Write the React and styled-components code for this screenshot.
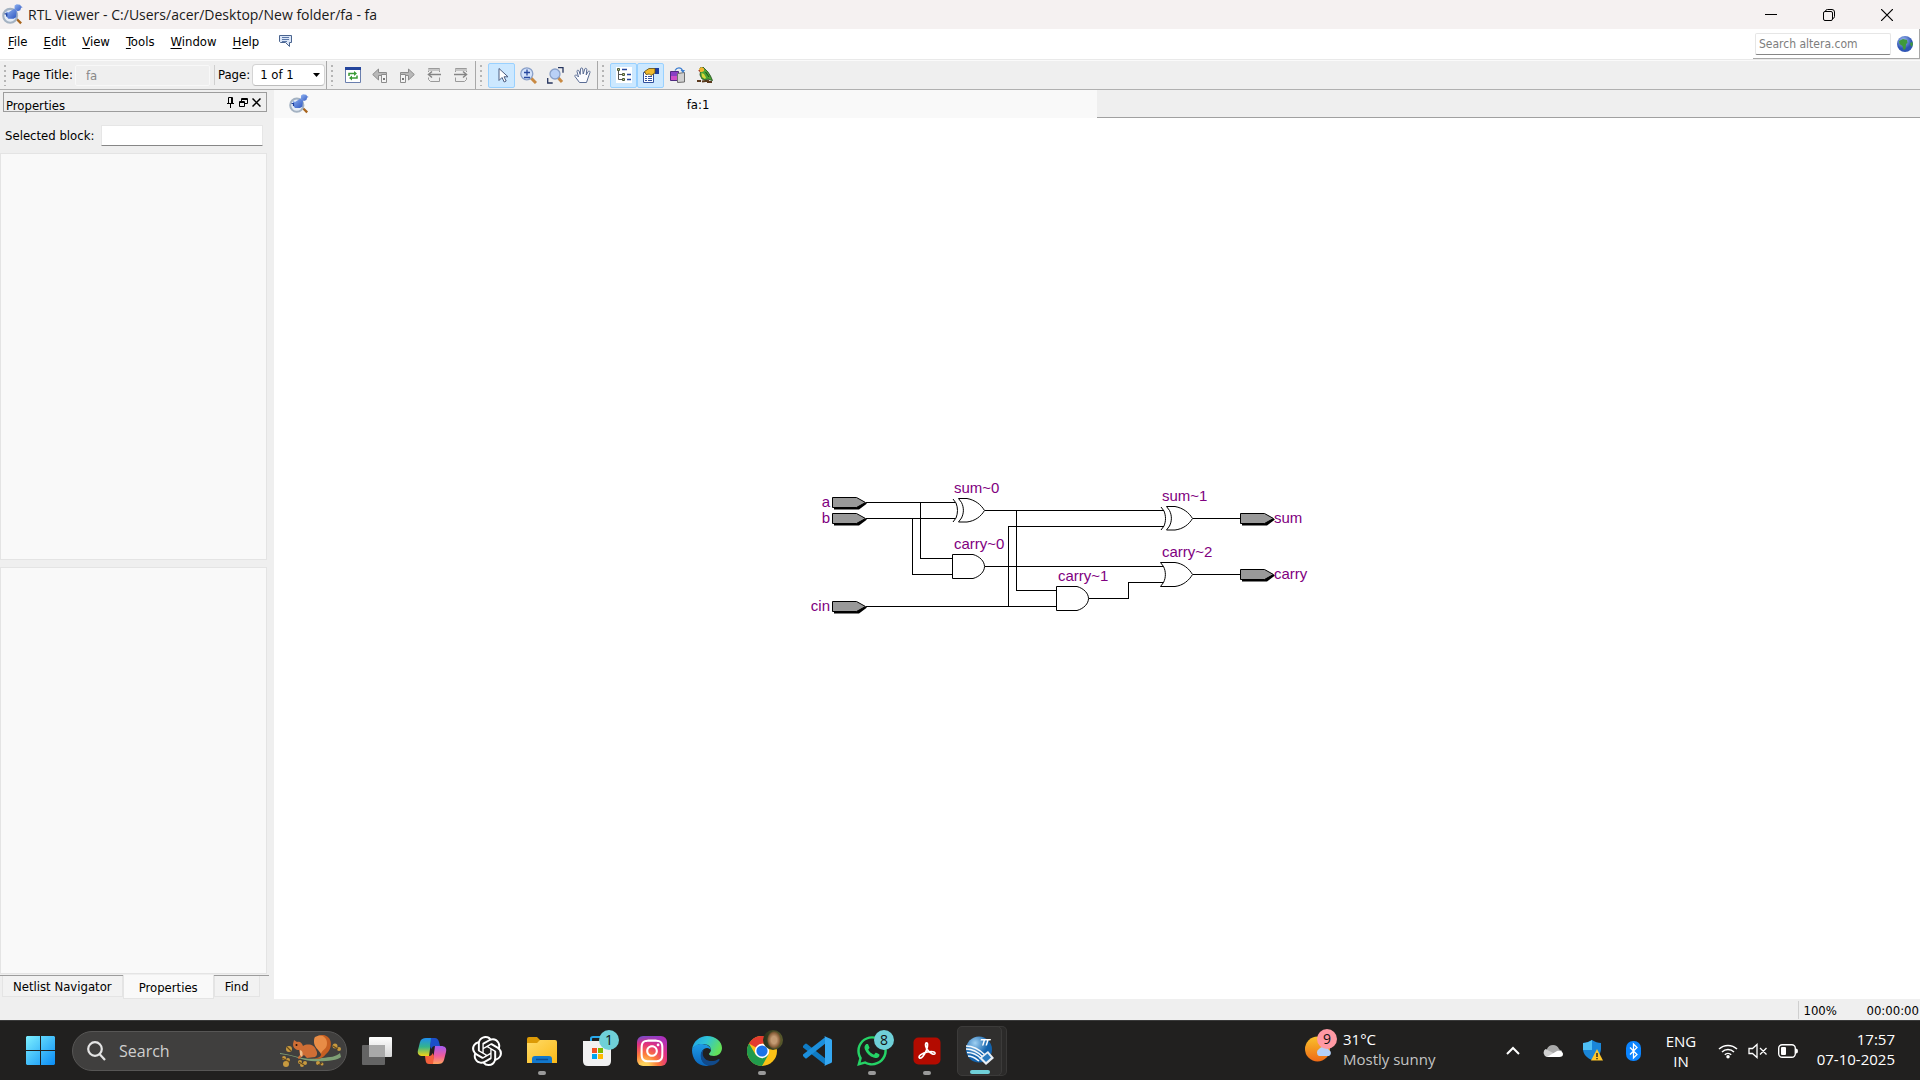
import React from "react";
import styled, { createGlobalStyle, css } from "styled-components";
import { SiOpenai } from "react-icons/si";
import { FaInstagram, FaWhatsapp } from "react-icons/fa";

const toolFont = `"DejaVu Sans Condensed", "DejaVu Sans", sans-serif`;
const shellFont = `"Open Sans", "Noto Sans", sans-serif`;

const GlobalStyle = createGlobalStyle`
  *, *::before, *::after { box-sizing: border-box; }
  body { margin: 0; background: #efefef; }
  button, input, select { font: inherit; color: inherit; margin: 0; padding: 0; border: 0; background: none; }
  svg { display: block; flex: none; }
`;

const Page = styled.div`
  display: flex;
  flex-direction: column;
  min-height: 100vh;
  font: 13px/16px ${toolFont};
  font-stretch: condensed;
  color: #000;
`;

/* ---------- window chrome ---------- */
const TitleBar = styled.header`
  display: flex;
  align-items: center;
  height: 29px;
  padding: 0 4px 0 2px;
  gap: 5px;
  background: #f5f1f1;
`;
const Title = styled.h1`
  flex: 1;
  margin: 0;
  font: 400 14px/20px ${shellFont};
  color: #1a1a1a;
`;
const WindowButtons = styled.div`
  display: flex;
`;
const WindowButton = styled.button`
  display: grid;
  place-items: center;
  width: 58px;
  height: 28px;
`;

const MenuBar = styled.div`
  display: flex;
  align-items: stretch;
  justify-content: space-between;
  height: 31px;
  background: #fff;
  border-bottom: 1px solid #e9e9e9;
`;
const Menus = styled.nav`
  display: flex;
  align-items: flex-start;
  padding-top: 3px;
`;
const MenuButton = styled.button`
  padding: 0 8px;
  height: 20px;
  line-height: 20px;
  &::first-letter { text-decoration: underline; text-underline-offset: 2px; }
`;
const IconMenuButton = styled.button`
  display: grid;
  place-items: center;
  width: 32px;
  height: 18px;
  padding-left: 5px;
`;
const SearchDock = styled.form`
  display: flex;
  align-items: center;
  gap: 6px;
  height: 30px;
  padding: 0 6px 0 2px;
  border-right: 1px solid #a8a8a8;
  border-bottom: 1px solid #a8a8a8;
`;
const SiteSearch = styled.input`
  width: 136px;
  height: 22px;
  padding: 0 3px;
  font-size: 12px;
  border: 1px solid #e6e6e6;
  border-bottom-color: #868686;
  border-radius: 2px;
  outline: 0;
  &::placeholder { color: #7d7d7d; opacity: 1; }
`;

/* ---------- tool bar ---------- */
const ToolBar = styled.div`
  display: flex;
  height: 30px;
  background: #efefef;
  border-top: 1px solid #fafafa;
  border-bottom: 1px solid #b0b0b0;
`;
const ToolGroup = styled.div`
  display: flex;
  align-items: center;
  padding: 0 1px 0 4px;
  border-right: 1px solid ${(p) => (p.$last ? "transparent" : "#a8a8a8")};
`;
const Grip = styled.span`
  width: 3px;
  height: 21px;
  margin-right: 5px;
  background: repeating-linear-gradient(#b5b5b5 0 2px, transparent 2px 5px) 0 0 / 2px 100% no-repeat;
`;
const ToolLabel = styled.label`
  white-space: nowrap;
  padding-right: 2px;
`;
const PageTitleInput = styled.input`
  width: 135px;
  height: 21px;
  padding: 0 10px;
  border: 1px solid #f8f8f8;
  border-radius: 2px;
  color: #888;
`;
const Separator = styled.span`
  width: 1px;
  height: 20px;
  margin: 0 3px 0 4px;
  background: #cfcfcf;
`;
const SelectWrap = styled.span`
  display: grid;
  align-items: center;
  & > * { grid-area: 1 / 1; }
  & > svg { justify-self: end; margin-right: 5px; pointer-events: none; }
`;
const PageSelect = styled.select`
  appearance: none;
  width: 73px;
  height: 22px;
  padding-left: 7px;
  background: #fff;
  border: 1px solid #d4d4d4;
  border-bottom-color: #bcbcbc;
  border-radius: 4px;
`;
const ToolButton = styled.button`
  display: grid;
  place-items: center;
  width: 27px;
  height: 25px;
  border: 1px solid transparent;
  border-radius: 2px;
  ${(p) => p.$on && css`
    background: #cce8ff;
    border-color: #99d1ff;
  `}
`;

/* ---------- body ---------- */
const Body = styled.div`
  display: flex;
  flex: 1;
`;
const Side = styled.aside`
  display: flex;
  flex-direction: column;
  width: 274px;
  flex: none;
  background: #efefef;
`;
const DockTitle = styled.div`
  display: flex;
  align-items: center;
  height: 20px;
  margin: 2px 7px 0 3px;
  padding: 0 3px 0 2px;
  border: 1px solid #9c9c9c;
`;
const DockName = styled.h2`
  flex: 1;
  margin: 0;
  padding-top: 8px;
  font: inherit;
`;
const DockButton = styled.button`
  display: grid;
  place-items: center;
  width: 13px;
  height: 14px;
`;
const BlockRow = styled.div`
  display: flex;
  align-items: center;
  gap: 7px;
  height: 21px;
  margin: 13px 11px 7px 5px;
  & > label { white-space: nowrap; }
`;
const BlockInput = styled.input`
  flex: 1;
  min-width: 0;
  height: 21px;
  padding: 0 4px;
  background: #fff;
  border: 1px solid #e6e6e6;
  border-bottom-color: #868686;
  border-radius: 1px;
`;
const Pane = styled.div`
  flex: 1;
  margin: 0 7px ${(p) => (p.$last ? 1 : 7)}px 0;
  background: #f9f9f9;
  border: 1px solid #e4e4e4;
`;
const DockTabs = styled.div`
  display: flex;
  align-items: flex-start;
  height: 24px;
  margin: 0 5px 0 0;
  padding-left: 2px;
  border-top: 1px solid #9c9c9c;
`;
const DockTab = styled.button`
  height: ${(p) => (p.$on ? 24 : 21)}px;
  margin-top: ${(p) => (p.$on ? -1 : 0)}px;
  padding: ${(p) => (p.$on ? "2px 15px 0" : "1px 10px 0")};
  background: ${(p) => (p.$on ? "#f9f9f9" : "#f2f2f2")};
  border: 1px solid #e4e4e4;
  border-top: 0;
`;
const Main = styled.main`
  display: flex;
  flex-direction: column;
  flex: 1;
  min-width: 0;
`;
const DocTabs = styled.div`
  display: flex;
  height: 28px;
  background: linear-gradient(#a0a0a0, #a0a0a0) 0 100% / 100% 1px no-repeat #efefef;
`;
const DocTab = styled.button`
  display: flex;
  align-items: center;
  gap: 4px;
  width: 50%;
  padding: 0 14px 0 15px;
  background: #f9f9f9;
  & > span { flex: 1; text-align: center; padding-top: 2px; }
`;
const Canvas = styled.section`
  display: grid;
  place-items: center;
  flex: 1;
  background: #fff;
  & text { font: 15px "Liberation Sans", Arial, sans-serif; fill: #800080; }
`;
const StatusBar = styled.footer`
  display: flex;
  justify-content: flex-end;
  align-items: center;
  height: 21px;
`;
const StatusCell = styled.span`
  padding: 2px 1px 0 4px;
  border-left: 1px solid ${(p) => (p.$line ? "#cfcfcf" : "transparent")};
  min-width: ${(p) => (p.$line ? 63 : 0)}px;
`;

/* ---------- task bar ---------- */
const TaskBar = styled.footer`
  display: flex;
  align-items: center;
  height: 60px;
  padding: 0 25px 0 26px;
  background: #21201f;
  border-top: 1px solid #3a3a3a;
  color: #fff;
  font: 15px/20px ${shellFont};
`;
const TaskSearch = styled.label`
  display: flex;
  align-items: center;
  gap: 13px;
  width: 275px;
  height: 40px;
  margin: 0 15px 0 17px;
  padding: 0 3px 0 14px;
  background: #403f3e;
  border: 1px solid #575655;
  border-radius: 20px;
  & > input { flex: 1; min-width: 0; font-size: 16px; outline: 0; }
  & > input::placeholder { color: #cfcfcf; opacity: 1; }
`;
const Apps = styled.div`
  display: flex;
  gap: 25px;
  flex: 1;
`;
const AppButton = styled.button`
  position: relative;
  display: grid;
  place-items: center;
  justify-content: center;
  width: 30px;
  height: 50px;
  color: #fff;
  &::after {
    content: "";
    display: ${(p) => (p.$running || p.$active ? "block" : "none")};
    position: absolute;
    bottom: 1px;
    left: 50%;
    width: ${(p) => (p.$active ? 20 : 8)}px;
    height: 4px;
    margin-left: ${(p) => (p.$active ? -10 : -4)}px;
    border-radius: 2px;
    background: ${(p) => (p.$active ? "#6fd0d8" : "#9a9a9a")};
  }
  ${(p) => p.$active && css`
    width: 45px;
    margin-left: -10px;
    background: #302f2e;
    border: 1px solid #3c3b3a;
    border-radius: 5px;
    box-shadow: 5px 0 0 -1px #2b2a29, 5px 0 0 0 #393837;
  `}
`;
const Badge = styled.span`
  position: absolute;
  top: 4px;
  right: -7px;
  width: 20px;
  height: 20px;
  border-radius: 50%;
  background: ${(p) => p.$color || "#6fd0d8"};
  color: #111;
  font: 14px/20px ${shellFont};
  text-align: center;
`;
const InstaTile = styled.span`
  display: grid;
  place-items: center;
  width: 30px;
  height: 30px;
  border-radius: 6px;
  font-size: 26px;
  background: radial-gradient(circle at 25% 105%, #ffd35c 0 12%, #fd7a3a 35%, #e03080 62%, transparent 85%), linear-gradient(120deg, #4a5ae0, #b32fb8 60%);
`;
const Weather = styled.button`
  position: relative;
  display: flex;
  align-items: center;
  gap: 10px;
  width: 188px;
  height: 50px;
  padding-bottom: 3px;
  text-align: left;
  ${Badge} { top: 3px; left: 12px; }
`;
const Dim = styled.span`
  display: block;
  color: #c4c4c4;
`;
const Tray = styled.div`
  display: flex;
  align-items: center;
`;
const TrayButton = styled.button`
  display: grid;
  place-items: center;
  width: ${(p) => p.$w || 40}px;
  height: 50px;
`;
const QuickSettings = styled.button`
  display: flex;
  align-items: center;
  gap: 10px;
  height: 50px;
  margin-left: 9px;
`;
const Clock = styled.button`
  width: 97px;
  height: 50px;
  padding-bottom: 3px;
  text-align: right;
`;

/* ---------- drawings ---------- */
const ViewerIcon = ({ size = 20 }) => (
  <svg width={size} height={size} viewBox="0 0 20 20">
    <defs>
      <linearGradient id={`vb${size}`} x1="0" y1="0" x2="1" y2="1">
        <stop offset="0" stopColor="#8fb2f2" /><stop offset="1" stopColor="#2f57c0" />
      </linearGradient>
    </defs>
    <path d="M13.200 15l1.600-1.400 4.200 4-1.600 1.700z" fill="#a8641c" />
    <circle cx="7.800" cy="11.200" r="6.600" fill="#e6edf6" stroke="#a4b2c2" strokeWidth="2" />
    <path d="M4 7l2 1 5.500-3.500 2.500 2-.5 6-2.500 1.500H6l-2-2.500z" fill={`url(#vb${size})`} />
    <path d="M12 1.500l2-1.200 3.200.4 1 1.500 1.500.8-1.500.5-.8 2.500-2.500 1-3-2z" fill={`url(#vb${size})`} />
    <path d="M2.500 9.500h2v2.500" stroke="#1d3f9c" strokeWidth="1.200" fill="none" />
  </svg>
);

const Chat = () => (
  <svg width="15" height="14" viewBox="0 0 15 14">
    <path d="M1.500 1.500h12v7h-2v4l-4-4h-5l-1-1z" fill="#dbe6f7" stroke="#4a648f" />
    <path d="M4 3.500h7M4 5.500h7M4 7.500h5" stroke="#5b78a8" />
  </svg>
);

const Globe = () => (
  <svg width="16" height="16" viewBox="0 0 16 16">
    <defs><radialGradient id="globe" cx=".4" cy=".3"><stop offset="0" stopColor="#a9c4f5" /><stop offset="1" stopColor="#2f55b5" /></radialGradient></defs>
    <circle cx="8" cy="8" r="8" fill="url(#globe)" />
    <path d="M2 5l4-2 4 1 .5 3-1.500 1-.5 5-2 1-1-4-3-2zM13 7l2.500-1 .3 3-1.800 2z" fill="#3f9a3c" />
  </svg>
);

const Refresh = () => (
  <svg width="16" height="16" viewBox="0 0 16 16">
    <path d="M.5.5h15v15H.5z" fill="#fff" stroke="#6a7fae" />
    <path d="M0 0h16v3H0z" fill="#24459c" />
    <path d="M4 9V6.500h5.500M12 8.500V11H6.500" stroke="#3a9b35" strokeWidth="1.500" fill="none" />
    <path d="M9 4l3 2.500L9 9zM7 8.500L4 11l3 2.500z" fill="#3a9b35" />
  </svg>
);

const NavArrow = ({ flip }) => (
  <svg width="16" height="16" viewBox="0 0 16 16">
    <g transform={flip ? "matrix(-1 0 0 1 16 0)" : undefined}>
      <path d="M.7 7.500L6.500 2v3.500h8v3h-8V13z" fill="#b9b9b9" stroke="#8c8c8c" />
      <path d="M9.500 7.500h5v8h-5z" fill="#f4f4f4" stroke="#8c8c8c" />
      <path d="M11 11h2v2h-2z" fill="#777" />
    </g>
  </svg>
);

const SheetArrow = ({ flip }) => (
  <svg width="16" height="16" viewBox="0 0 16 16">
    <g transform={flip ? "matrix(-1 0 0 1 16 0)" : undefined}>
      <path d="M2.500 5V1.500h11V5M2.500 10.500v2l2 2h9v-4" fill="#eee" stroke="#9a9a9a" />
      <path d="M2 3h11.500" stroke="#c6c6c6" strokeWidth="2" />
      <path d="M3 7.500h12" stroke="#858585" strokeWidth="1.500" />
      <path d="M6 4.500l-3.500 3 3.500 3" stroke="#858585" strokeWidth="1.500" fill="none" />
    </g>
  </svg>
);

const Cursor = () => (
  <svg width="18" height="18" viewBox="0 0 18 18">
    <path d="M6 2.500v12l3-3 2.200 4.500 2-1-2.200-4.200h4z" fill="#fff" stroke="#4b5c80" />
  </svg>
);

const Lens = ({ plus }) => (
  <svg width="17" height="17" viewBox="0 0 17 17">
    {plus ? (
      <>
        <path d="M11 11l5 5" stroke="#c98a43" strokeWidth="3" />
        <circle cx="6.800" cy="6.800" r="6" fill="#d3e2fa" stroke="#8aa0c8" strokeWidth="1.300" />
        <path d="M4 5.500h6M7 2.500v6M4 10.500h6" stroke="#26479f" strokeWidth="1.300" />
      </>
    ) : (
      <>
        <path d="M11 0.700h5v5M.7 11v5h5" stroke="#26355e" strokeWidth="1.300" fill="none" />
        <path d="M11 10.500l4 4.500" stroke="#c98a43" strokeWidth="3" />
        <circle cx="8" cy="7" r="5" fill="#b9d0f6" stroke="#8aa0c8" strokeWidth="1.300" />
      </>
    )}
  </svg>
);

const Hand = () => (
  <svg width="18" height="17" viewBox="0 0 18 17">
    <path d="M5.500 15.500L1 9.500c-.6-1.400 1-2 1.800-1.200L4.500 10 3 4.500c-.2-1.500 1.500-1.700 2-.5l1.200 3.500L6.500 2c.2-1.400 2-1.400 2.200 0l.5 5L10.800 2c.4-1.200 2-.8 2 .5l-.6 5.500 2-3.500c.8-1 2-.3 1.800.8L14 11l-1.500 4.500z" fill="#fbfcff" stroke="#5a6c94" />
  </svg>
);

const Tree = () => (
  <svg width="16" height="16" viewBox="0 0 16 16">
    <path d="M0 0h16v16H0z" fill="#fff" />
    <path d="M2.500 4v8.500H6M2.500 7.500H6" stroke="#555" fill="none" />
    <path d="M1.500 1.500h2v2h-2zM6.500 6.500h2v2h-2zM6.500 11.500h2v2h-2z" fill="#c8c87a" stroke="#4a5a3a" />
    <path d="M6 2.500h5M11 7.500h4M11 12.500h4" stroke="#26479f" strokeWidth="1.500" />
  </svg>
);

const PropertySheet = () => (
  <svg width="17" height="16" viewBox="0 0 17 16">
    <path d="M1.500 5.500h10v10h-10z" fill="#fff" stroke="#31519e" />
    <path d="M3 9.500h2M6 9.500h4M3 11.500h2M6 11.500h4M3 13.500h2M6 13.500h4" stroke="#31519e" />
    <path d="M13 1h4v6h-4z" fill="#1d3da0" />
    <path d="M2.500 4.500L7 1.500h6V6L9 8.500 7.500 7 4 7.500z" fill="#f0b92c" stroke="#5c4712" strokeWidth=".8" />
  </svg>
);

const Partition = () => (
  <svg width="16" height="16" viewBox="0 0 16 16">
    <path d="M.5 4.500h8v9h-8z" fill="#8a3fc4" stroke="#4f2a80" />
    <path d="M1 9h7v4H1z" fill="#d04fc8" />
    <path d="M7.500 6.500l7-1v9.500l-7 .5z" fill="#d0d0d0" stroke="#6e6e6e" />
    <path d="M5 3.500C7 0 11 0 12.500 3.500" stroke="#3f7fd0" strokeWidth="1.300" fill="none" />
    <path d="M10.500 3h4.500l-2 3z" fill="#3f7fd0" />
  </svg>
);

const Parrot = () => (
  <svg width="16" height="16" viewBox="0 0 16 16">
    <path d="M0 14h4M5 14.500l7-1M10 15h5" stroke="#5b3a1e" strokeWidth="2" />
    <path d="M3 1l3-1 2 2 3 3 2.500 4 2 4.500-2-.5-2.500-1-2 1-4-1-2-4 .5-4z" fill="#4aa335" stroke="#1f4d17" strokeWidth=".8" />
    <path d="M2 2L4.500 0l2.500 1.500V4L5 5 3 5z" fill="#f3b431" />
    <path d="M4.500 6l2.500 1 2 3.500-1 1.500-3-2z" fill="#d6d63a" />
    <path d="M8.500 5l3.500 5" stroke="#1f4d17" />
    <path d="M1 3.500L3 3v2z" fill="#a3341c" />
  </svg>
);

const Pin = () => (
  <svg width="9" height="11" viewBox="0 0 9 11" fill="none" stroke="#000"><path d="M2.500 6V.5h4V6M1 6.500h7M4.500 7v4M5.500 1v5" /></svg>
);
const Float = () => (
  <svg width="9" height="9" viewBox="0 0 9 9" fill="none" stroke="#000"><path d="M2.500 3V.5h6v5H6M2.500 1.500h6M.5 3.500h5v5h-5zM.5 4.500h5" /></svg>
);
const Cross = () => (
  <svg width="9" height="9" viewBox="0 0 9 9" stroke="#000" strokeWidth="1.500"><path d="M.5.5l8 8M8.500.5l-8 8" /></svg>
);

/* ---------- schematic ---------- */
const Port = ({ x, y }) => (
  <g transform={`translate(${x} ${y})`}>
    <path d="M2 5h22l6-4h4l1 .5-8 6H2z" fill="#000" />
    <path d="M.5-4.500h24l9 5-9 5h-24z" fill="#999" stroke="#000" />
  </g>
);
const AndGate = ({ x, y }) => (
  <path transform={`translate(${x} ${y})`} d="M21-11.500H.5v24H21c7-2 11.500-7 11.500-12s-4.500-10-11.500-12z" fill="#fff" stroke="#000" />
);
const OrGate = ({ x, y }) => (
  <path transform={`translate(${x} ${y})`} d="M.5-11.500H15c8 1 14 6 17.500 12-3.500 6-9.500 11-17.500 12H.5l3-4c2.500-5 2.500-11 0-16z" fill="#fff" stroke="#000" />
);
const XorGate = ({ x, y }) => (
  <g transform={`translate(${x} ${y})`} fill="none" stroke="#000">
    <path d="M1-11l3 4c2 5 2 10 0 15l-3 4" />
    <path d="M6.500-11.500H15c8 1.500 14 6 17.500 12-3.500 6-9.500 10.500-17.500 11.500H6.500l3-4c2.500-5 2.500-10.500 0-15.500z" />
  </g>
);

const Schematic = () => (
  <svg width="594" height="161" viewBox="800 478 594 161" role="img" aria-label="Full adder netlist">
    <g fill="none" stroke="#000" shapeRendering="crispEdges">
      <path d="M866 502.500h89M866 518.500h89M866 606.500h190M920.500 502.500v56h32M912.500 518.500v56h40" />
      <path d="M985 510.500h179M1016.500 510.500v80h40M1008.500 606.500v-80h155M985 566.500h179" />
      <path d="M1089 598.500h39.500v-16h36M1193 518.500h47M1193 574.500h47" />
    </g>
    <Port x={832} y={502} /><Port x={832} y={518} /><Port x={832} y={606} />
    <Port x={1240} y={518} /><Port x={1240} y={574} />
    <XorGate x={952} y={510} /><XorGate x={1160} y={518} />
    <AndGate x={952} y={566} /><AndGate x={1056} y={598} /><OrGate x={1160} y={574} />
    <g textAnchor="end">
      <text x="830" y="507">a</text><text x="830" y="523">b</text><text x="830" y="611">cin</text>
    </g>
    <text x="954" y="493">sum~0</text><text x="954" y="549">carry~0</text>
    <text x="1058" y="581">carry~1</text><text x="1162" y="501">sum~1</text>
    <text x="1162" y="557">carry~2</text><text x="1274" y="523">sum</text><text x="1274" y="579">carry</text>
  </svg>
);

/* ---------- task bar drawings ---------- */
const Windows = () => (
  <svg width="29" height="29" viewBox="0 0 29 29">
    <defs><linearGradient id="win" x1="0" y1="0" x2="1" y2="1"><stop offset="0" stopColor="#7df0ff" /><stop offset="1" stopColor="#0a8cf5" /></linearGradient></defs>
    <path d="M1 0h13v14H0V1zM15 0h13l1 1v13H15zM0 15h14v14H1l-1-1zM15 15h14v13l-1 1H15z" fill="url(#win)" />
  </svg>
);
const Squirrel = () => (
  <svg width="63" height="34" viewBox="0 0 63 34">
    <path d="M0 19c14 2 25 8 42 5 8-1 14-1 18-5l1 4c-5 5-28 5-36 3C15 23 10 21 0 20z" fill="#7fa075" />
    <path d="M32 24c10 1 11-4 7-9-8-7-4-14 4-14 10 1 10 14 3 19-3 4-7 6-14 4z" fill="#c65f22" />
    <path d="M35 3c6-4 12 0 12 6 0 7-5 6-6 11-2-4-7-7-7-12 0-2 0-4 1-5z" fill="#e88c46" />
    <path d="M13 10l1-4 3 2c3-1 5 1 6 4 5-3 12-1 13 4 2 3 1 6-1 7l-8 1-3-3-5 4c-2-1-1-2 1-4l-1-5c-3 0-6-2-6-6z" fill="#cf6e35" />
    <path d="M20 16c3 1 3 4 2 7l-2-2z" fill="#f0bd8a" /><circle cx="16.500" cy="11" r="1" fill="#2b1408" />
    <g fill="#c79a3f"><circle cx="9" cy="15" r="3" /><circle cx="4" cy="24" r="2" /><circle cx="8" cy="26" r="2" /><circle cx="6" cy="30" r="3" /><circle cx="20" cy="28" r="2" /><circle cx="25" cy="29" r="2" /><circle cx="22" cy="31" r="2" /><circle cx="38" cy="29" r="2" /><circle cx="42" cy="30" r="1.500" /><circle cx="55" cy="12" r="2.500" /><circle cx="59" cy="15" r="2" /></g>
    <g stroke="#6b4c1a" strokeWidth="1.200"><path d="M7 13l4 4M2 24l8 4M19 28l5 3M38 31l4-2M53 12l5 3" /></g>
  </svg>
);
const TaskView = () => (
  <svg width="30" height="28" viewBox="0 0 30 28">
    <defs><linearGradient id="tv" x1="0" y1="0" x2="0" y2="1"><stop offset="0" stopColor="#fff" /><stop offset="1" stopColor="#d5d5d5" /></linearGradient></defs>
    <rect y="8" width="23" height="20" rx="1" fill="#646464" /><rect x="7" width="23" height="20" rx="1" fill="url(#tv)" /><path d="M7 8h16v12H7z" fill="#a9a9a9" />
  </svg>
);
const Copilot = () => (
  <svg width="30" height="28" viewBox="0 0 30 28">
    <defs>
      <linearGradient id="cp1" x1="0" y1="0" x2="0" y2="1"><stop offset="0" stopColor="#1f8df0" /><stop offset=".5" stopColor="#35b58a" /><stop offset="1" stopColor="#f4d414" /></linearGradient>
      <linearGradient id="cp2" x1="0" y1="0" x2="0" y2="1"><stop offset="0" stopColor="#a35cf2" /><stop offset=".55" stopColor="#f05c9c" /><stop offset="1" stopColor="#ffa45c" /></linearGradient>
    </defs>
    <path d="M18 9h6c4 0 6 2 5 6l-2 8c-1 3-3 4-6 4h-9c3 0 3-2 4-4z" fill="url(#cp2)" />
    <path d="M12 19H6c-4 0-6-2-5-6l2-8c1-3 3-4 6-4h9c-3 0-3 2-4 4z" fill="url(#cp1)" />
    <path d="M14 1h4c2 0 3 1 4 4l1 4h-5c-2 0-3 1-3.500 3L13 9z" fill="#1c4fc9" />
    <path d="M16 27h-4c-2 0-3-1-3.500-4l-.5-4h4c2 0 3-1 3.500-3L17 19z" fill="#f3603c" />
  </svg>
);
const Folder = () => (
  <svg width="30" height="27" viewBox="0 0 30 27">
    <defs><linearGradient id="fd" x1="0" y1="0" x2="1" y2="1"><stop offset="0" stopColor="#ffdb68" /><stop offset="1" stopColor="#fbb917" /></linearGradient></defs>
    <path d="M0 2q0-2 2-2h8l3 3v5H0z" fill="#dc9a06" /><path d="M0 6h10l3-3h15q2 0 2 2v21H0z" fill="url(#fd)" />
    <path d="M5 26v-4q0-3 3-3h14q3 0 3 3v4z" fill="#1378cc" /><path d="M9 22.500h12" stroke="#0b4c94" strokeWidth="1.500" />
  </svg>
);
const Store = () => (
  <svg width="30" height="30" viewBox="0 0 30 30">
    <path d="M9 7V2.500Q9 1 11 1h8q2 0 2 2v4" fill="none" stroke="#28a8ea" strokeWidth="2" />
    <path d="M1 5h28v20q0 5-5 5H6q-5 0-5-5z" fill="#f1f1f1" />
    <path d="M10 12h5v5h-5z" fill="#f25022" /><path d="M16 12h5v5h-5z" fill="#7fba00" /><path d="M10 18h5v5h-5z" fill="#00a4ef" /><path d="M16 18h5v5h-5z" fill="#ffb900" />
  </svg>
);
const Edge = () => (
  <svg width="30" height="30" viewBox="0 0 30 30">
    <defs>
      <linearGradient id="e1" x1="0" y1="0" x2="1" y2=".4"><stop offset="0" stopColor="#1f9ee6" /><stop offset=".5" stopColor="#2fc4d8" /><stop offset="1" stopColor="#63e05a" /></linearGradient>
      <linearGradient id="e2" x1="0" y1="0" x2="0" y2="1"><stop offset="0" stopColor="#1e9be6" /><stop offset="1" stopColor="#0a66bd" /></linearGradient>
    </defs>
    <path d="M0 14C1 5 8 0 15 0c9 0 15 6 15 12 0 5-4 8-8 8-3 0-5-1-5-2s2-2 2-4c0-4-4-6-8-6-6 0-10 3-11 6z" fill="url(#e1)" />
    <path d="M0 14c1-4 5-6 10-6 5 0 9 3 9 6-1-1-2-2-4-2-4 0-6 4-6 8 0 5 4 9 9 9.500C6 32 0 23 0 14z" fill="url(#e2)" />
    <path d="M12 13c-4 7 2 13 9 12 3 0 5-2 6-2 1 0 .5 1 0 2-5 6-14 6-17 0-2-4-2-9 2-12z" fill="#114a8b" />
  </svg>
);
const Chrome = () => (
  <svg width="30" height="30" viewBox="0 0 30 30">
    <circle cx="15" cy="15" r="15" fill="#fbc116" /><path d="M15 15L2 7.500A15 15 0 0 1 28 7.500H15z" fill="#e33b2e" />
    <path d="M2 7.500A15 15 0 0 0 15 30l6.500-11.500L15 15l-6.500 3.500z" fill="#219b4c" />
    <circle cx="15" cy="15" r="7.200" fill="#fff" /><circle cx="15" cy="15" r="5.600" fill="#1a73e8" />
  </svg>
);
const Avatar = styled.span`
  position: absolute;
  top: 4px;
  right: -6px;
  width: 20px;
  height: 20px;
  border-radius: 50%;
  background: radial-gradient(ellipse 7px 9px at 55% 50%, #c39a72 0 40%, #8a5f3a 80%, transparent 100%), linear-gradient(90deg, #26301a, #5a5a2c);
`;
const Code = () => (
  <svg width="30" height="30" viewBox="0 0 30 30">
    <path d="M1 10l2-2q1-1 2 0l19 15v6.500L1 11.500z" fill="#0f7bc4" /><path d="M1 20l2 2q1 1 2 0L24 7V.5L1 18.500z" fill="#1c8fdc" />
    <path d="M22 0l7 3q1 .5 1 1.500v21q0 1-1 1.500l-7 3q1-.5 1-2V2q0-1.500-1-2z" fill="#35a8f2" />
  </svg>
);
const Acrobat = () => (
  <svg width="28" height="28" viewBox="0 0 28 28">
    <rect width="27" height="27" x=".5" y=".5" rx="5" fill="#b30b00" />
    <path d="M13 6c2-1 2 3 .5 7-2 5-5 9-7 8-2-2 3-5 8-6 4-.7 8-.5 7.500 1.500-.8 2-5-.5-7-3C12.500 10.500 12 7 13 6z" fill="none" stroke="#fff" strokeWidth="1.700" />
  </svg>
);
const Quartus = () => (
  <svg width="28" height="29" viewBox="0 0 28 29">
    <defs><radialGradient id="qt" cx=".35" cy=".25"><stop offset="0" stopColor="#9fd0f2" /><stop offset="1" stopColor="#1363ad" /></radialGradient></defs>
    <circle cx="13" cy="13.500" r="13" fill="url(#qt)" />
    <path d="M0 10c7 0 13 3 19 9M0 13c7 0 12 3 17 8M1 16.500c6 0 10 2 14 6M2 20c5 0 7 2 11 5" stroke="#f3f8fc" strokeWidth="1.500" fill="none" />
    <path d="M13 22l9-7 6 7-8 7z" fill="#e8eef4" /><path d="M16 22l5.500-4.500 3.500 4L20 26z" fill="#2a7bbf" />
    <path d="M15 3h10l-.5 1.500h-2l-1.500 5h-1.500l1.500-5h-2l-1.500 5H16l1.500-5h-3z" fill="#fff" />
  </svg>
);
const SunCloud = () => (
  <svg width="28" height="26" viewBox="0 0 28 26">
    <defs><linearGradient id="sun" x1="0" y1="0" x2="0" y2="1"><stop offset="0" stopColor="#f9c22b" /><stop offset="1" stopColor="#ef6a16" /></linearGradient></defs>
    <circle cx="12.500" cy="13" r="12.500" fill="url(#sun)" />
    <path d="M14 20a4 4 0 0 1 0-7 6 6 0 0 1 10 1 3.300 3.300 0 0 1 0 6z" fill="#b4d0f8" />
  </svg>
);
const CloudIcon = () => (
  <svg width="20" height="14" viewBox="0 0 20 14">
    <path d="M4 13a4.500 4.500 0 0 1 0-8 6.500 6.500 0 0 1 12 0 4.500 4.500 0 0 1 0 8z" fill="#a9a9a9" /><path d="M4 13a4.500 4.500 0 0 1-1.500-8L14 11l4-5a4.500 4.500 0 0 1-2 7z" fill="#d0d0d0" />
    <path d="M4 13l10-6c3-1 6 1 6 3s-1 3-4 3z" fill="#fff" />
  </svg>
);
const Shield = () => (
  <svg width="20" height="21" viewBox="0 0 20 21">
    <path d="M9 0c3 2 6 3 9 3v6c0 5-4 9-9 11-5-2-9-6-9-11V3c3 0 6-1 9-3z" fill="#1a86d8" /><path d="M9 0v10H0V3c3 0 6-1 9-3z" fill="#4fc0f5" />
    <path d="M14 9l6 11.500H8z" fill="#ffc629" /><path d="M14 13v4M14 18v1.200" stroke="#222" strokeWidth="1.400" />
  </svg>
);
const BluetoothIcon = () => (
  <svg width="15" height="20" viewBox="0 0 15 20"><rect width="15" height="20" rx="7" fill="#0a84ff" /><path d="M4 6.500l7 7L7.500 17V3L11 6.500l-7 7" fill="none" stroke="#fff" strokeWidth="1.300" /></svg>
);
const Status = () => (
  <>
    <svg width="20" height="16" viewBox="0 0 20 16" fill="none" stroke="#fff" strokeWidth="1.500"><path d="M1 6a13 13 0 0 1 18 0M4 9a8.500 8.500 0 0 1 12 0M6.800 11.800a4.600 4.600 0 0 1 6.400 0" /><circle cx="10" cy="13.800" r="1" fill="#fff" /></svg>
    <svg width="20" height="16" viewBox="0 0 20 16" fill="none" stroke="#fff" strokeWidth="1.300"><path d="M1 5.500h3.500L9 1.500v13l-4.500-4H1zM12 5l6.500 6.500M18.500 5L12 11.500" /></svg>
    <svg width="20" height="14" viewBox="0 0 20 14"><rect x=".7" y=".7" width="16.600" height="12.600" rx="3.500" fill="none" stroke="#fff" strokeWidth="1.400" /><rect x="3" y="3" width="5" height="8" rx="1" fill="#fff" /><path d="M18 4.500q2 0 2 2.500t-2 2.500z" fill="#fff" /></svg>
  </>
);

const Tool = ({ label, on, children }) => (
  <ToolButton type="button" aria-label={label} title={label} $on={on}>{children}</ToolButton>
);

export default function App() {
  return (
    <Page>
      <GlobalStyle />
      <TitleBar>
        <ViewerIcon size={21} />
        <Title>RTL Viewer - C:/Users/acer/Desktop/New folder/fa - fa</Title>
        <WindowButtons>
          <WindowButton aria-label="Minimize"><svg width="12" height="12" viewBox="0 0 12 12"><path d="M0 5.500h12" stroke="#000" /></svg></WindowButton>
          <WindowButton aria-label="Restore"><svg width="12" height="12" viewBox="0 0 12 12" fill="none" stroke="#000"><rect x=".5" y="2.500" width="9" height="9" rx="1.500" /><path d="M2.500 2Q2.800.5 4.500.5h4.500q2.500 0 2.500 2.500v4.500q0 1.500-1.500 2" /></svg></WindowButton>
          <WindowButton aria-label="Close"><svg width="12" height="12" viewBox="0 0 12 12" stroke="#000" strokeWidth="1.200"><path d="M0 0l12 12M12 0L0 12" /></svg></WindowButton>
        </WindowButtons>
      </TitleBar>

      <MenuBar>
        <Menus aria-label="Main menu">
          {["File", "Edit", "View", "Tools", "Window", "Help"].map((m) => <MenuButton key={m}>{m}</MenuButton>)}
          <IconMenuButton aria-label="Feedback"><Chat /></IconMenuButton>
        </Menus>
        <SearchDock>
          <SiteSearch aria-label="Search altera.com" placeholder="Search altera.com" />
          <button type="button" aria-label="Go"><Globe /></button>
        </SearchDock>
      </MenuBar>

      <ToolBar>
        <ToolGroup>
          <Grip />
          <ToolLabel htmlFor="page-title">Page Title:</ToolLabel>
          <PageTitleInput id="page-title" defaultValue="fa" disabled />
          <Separator />
          <ToolLabel htmlFor="page-no">Page:</ToolLabel>
          <SelectWrap>
            <PageSelect id="page-no"><option>1 of 1</option></PageSelect>
            <svg width="7" height="4" viewBox="0 0 7 4"><path d="M0 0h7L3.500 4z" /></svg>
          </SelectWrap>
        </ToolGroup>
        <ToolGroup>
          <Grip />
          <Tool label="Refresh"><Refresh /></Tool>
          <Tool label="Back"><NavArrow /></Tool>
          <Tool label="Forward"><NavArrow flip /></Tool>
          <Tool label="Previous page"><SheetArrow /></Tool>
          <Tool label="Next page"><SheetArrow flip /></Tool>
        </ToolGroup>
        <ToolGroup>
          <Grip />
          <Tool label="Selection tool" on><Cursor /></Tool>
          <Tool label="Zoom tool"><Lens plus /></Tool>
          <Tool label="Fit in window"><Lens /></Tool>
          <Tool label="Hand tool"><Hand /></Tool>
        </ToolGroup>
        <ToolGroup $last>
          <Grip />
          <Tool label="Netlist navigator" on><Tree /></Tool>
          <Tool label="Properties" on><PropertySheet /></Tool>
          <Tool label="Partition"><Partition /></Tool>
          <Tool label="Bird's eye view"><Parrot /></Tool>
        </ToolGroup>
      </ToolBar>

      <Body>
        <Side>
          <DockTitle>
            <DockName>Properties</DockName>
            <DockButton aria-label="Pin"><Pin /></DockButton>
            <DockButton aria-label="Float"><Float /></DockButton>
            <DockButton aria-label="Close panel"><Cross /></DockButton>
          </DockTitle>
          <BlockRow>
            <label htmlFor="block">Selected block:</label>
            <BlockInput id="block" />
          </BlockRow>
          <Pane />
          <Pane $last />
          <DockTabs>
            <DockTab>Netlist Navigator</DockTab>
            <DockTab $on>Properties</DockTab>
            <DockTab>Find</DockTab>
          </DockTabs>
        </Side>
        <Main>
          <DocTabs><DocTab><ViewerIcon size={20} /><span>fa:1</span></DocTab></DocTabs>
          <Canvas><Schematic /></Canvas>
        </Main>
      </Body>

      <StatusBar>
        <StatusCell $line>100%</StatusCell>
        <StatusCell>00:00:00</StatusCell>
      </StatusBar>

      <TaskBar>
        <button aria-label="Start"><Windows /></button>
        <TaskSearch>
          <svg width="19" height="20" viewBox="0 0 19 20" fill="none" stroke="#e4e4e4" strokeWidth="2.200"><circle cx="8" cy="8" r="6.800" /><path d="M12.500 13l5.500 6" /></svg>
          <input placeholder="Search" aria-label="Search" />
          <Squirrel />
        </TaskSearch>
        <Apps>
          <AppButton aria-label="Task view"><TaskView /></AppButton>
          <AppButton aria-label="Copilot"><Copilot /></AppButton>
          <AppButton aria-label="ChatGPT"><SiOpenai size={30} /></AppButton>
          <AppButton aria-label="File Explorer" $running><Folder /></AppButton>
          <AppButton aria-label="Store"><Store /><Badge>1</Badge></AppButton>
          <AppButton aria-label="Instagram"><InstaTile><FaInstagram /></InstaTile></AppButton>
          <AppButton aria-label="Edge"><Edge /></AppButton>
          <AppButton aria-label="Chrome" $running><Chrome /><Avatar /></AppButton>
          <AppButton aria-label="Code"><Code /></AppButton>
          <AppButton aria-label="WhatsApp" $running><FaWhatsapp size={34} color="#25d366" /><Badge>8</Badge></AppButton>
          <AppButton aria-label="Acrobat" $running><Acrobat /></AppButton>
          <AppButton aria-label="Quartus" $active><Quartus /></AppButton>
        </Apps>
        <Weather>
          <SunCloud />
          <Badge $color="#ff99a4">9</Badge>
          <span>31°C<Dim>Mostly sunny</Dim></span>
        </Weather>
        <Tray>
          <TrayButton aria-label="Hidden icons" $w={40}><svg width="14" height="9" viewBox="0 0 14 9" fill="none" stroke="#fff" strokeWidth="2"><path d="M1 8l6-6 6 6" /></svg></TrayButton>
          <TrayButton aria-label="OneDrive"><CloudIcon /></TrayButton>
          <TrayButton aria-label="Security"><Shield /></TrayButton>
          <TrayButton aria-label="Bluetooth"><BluetoothIcon /></TrayButton>
          <TrayButton $w={56}><span>ENG<br />IN</span></TrayButton>
          <QuickSettings aria-label="Network, volume, battery"><Status /></QuickSettings>
          <Clock>17:57<br />07-10-2025</Clock>
        </Tray>
      </TaskBar>
    </Page>
  );
}
